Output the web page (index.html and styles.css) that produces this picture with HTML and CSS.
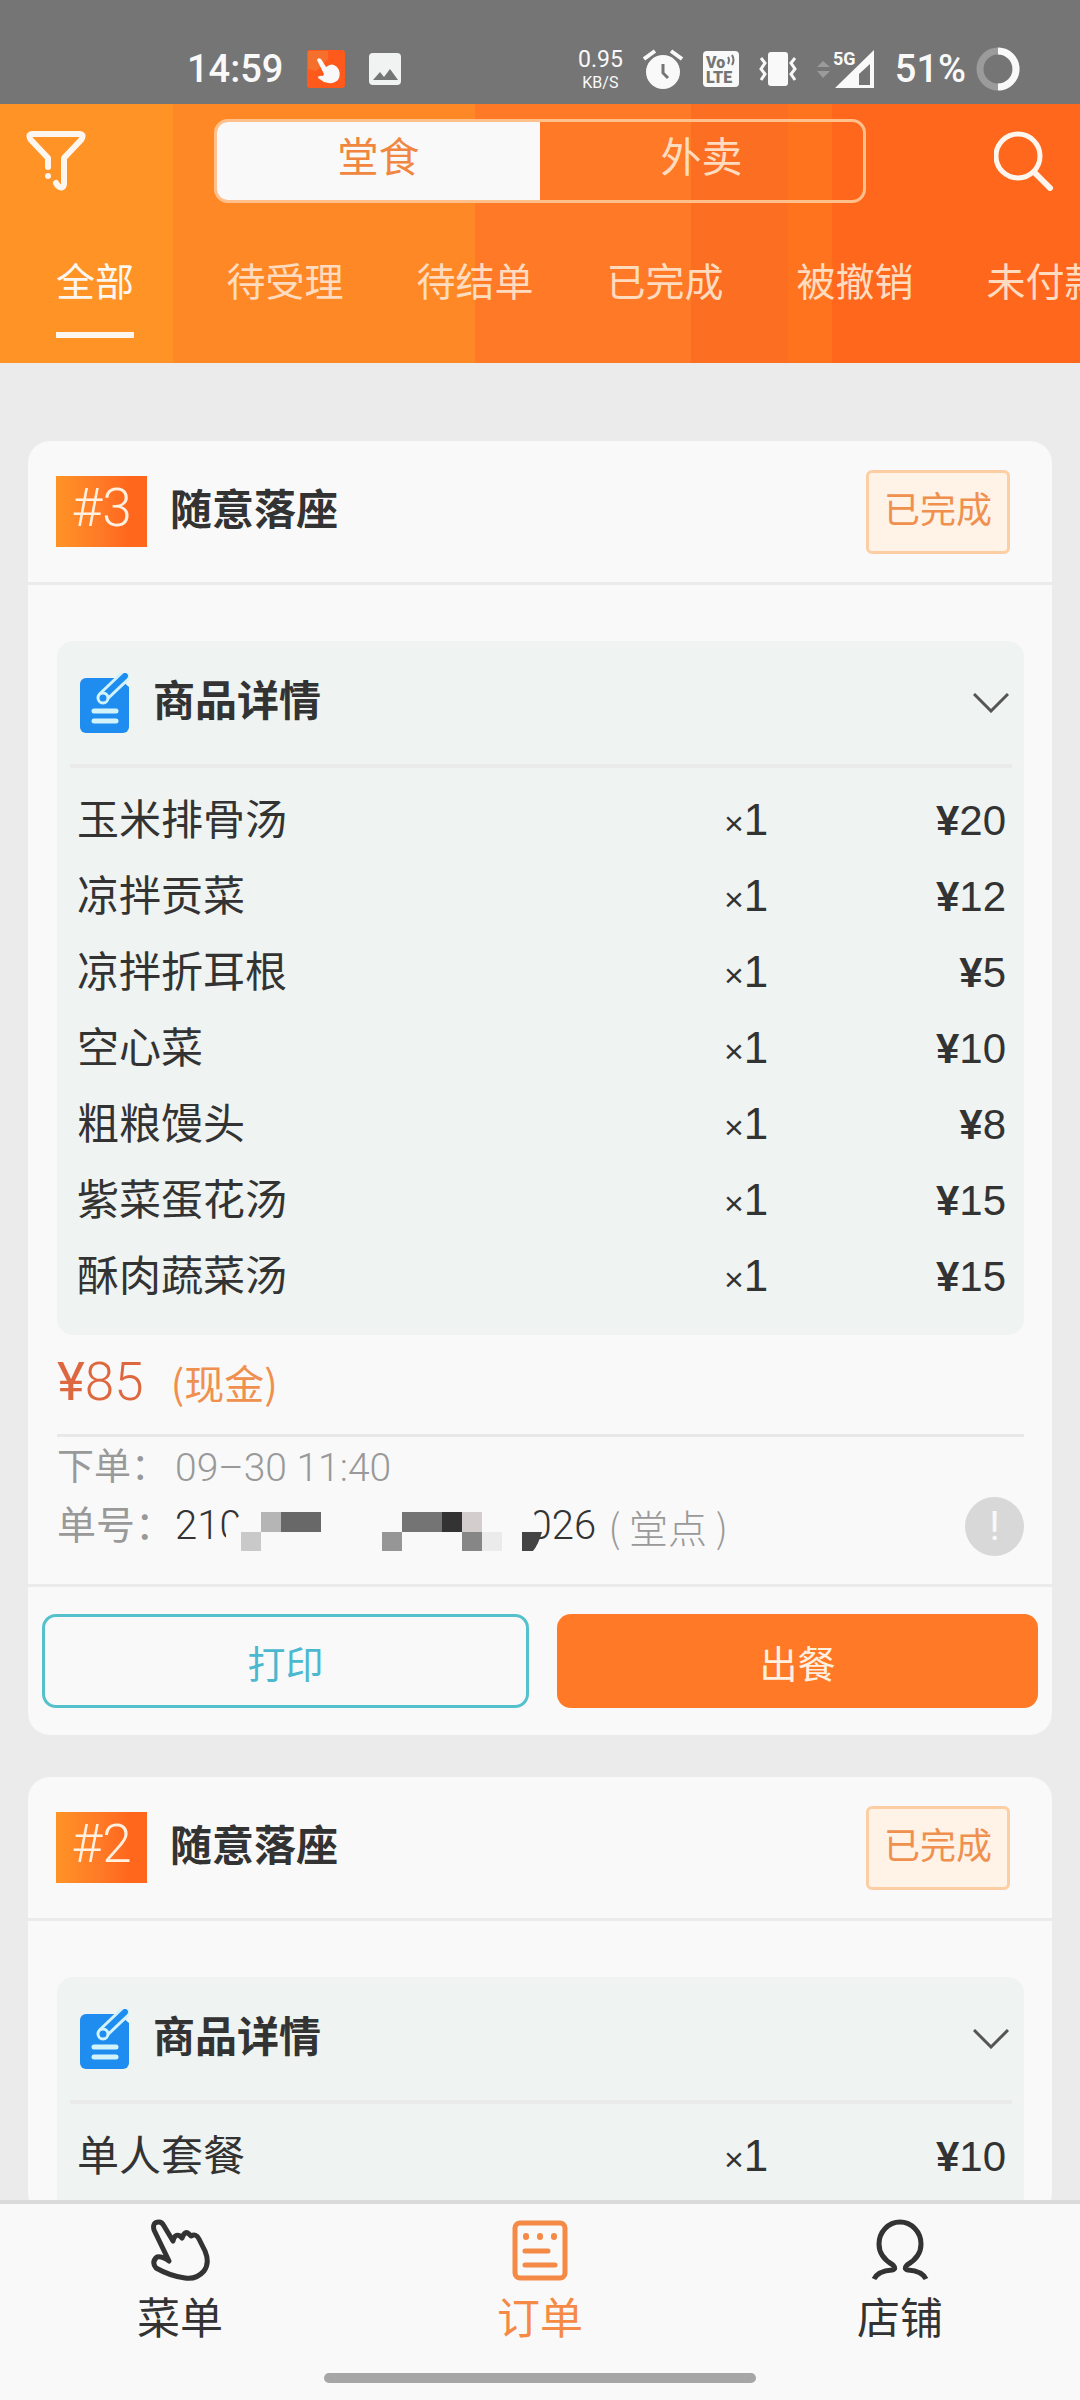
FILE: index.html
```html
<!DOCTYPE html>
<html lang="zh-CN">
<head>
<meta charset="utf-8">
<meta name="viewport" content="width=device-width, initial-scale=1">
<title>订单</title>
<link rel="stylesheet" href="styles.css">
</head>
<body>
<div class="app">
  <div class="status">
    <div class="status-left">
      <span class="clock">14:59</span>
      <svg class="app-badge" width="40" height="40" viewBox="0 0 40 40">
        <rect x="1" y="1" width="38" height="38" rx="3" fill="#ff5a1c"/>
        <path d="M2 2h20v8L10 22 2 20z" fill="#f5702c"/>
        <path d="M11 11q1-3 4-1l5 8q6-5 11 0 5 6 1 13-5 5-14 2l-6-4q0-3 5-2l1-2z" fill="#f9f9f9"/>
      </svg>
      <svg width="32" height="32" viewBox="0 0 32 32">
        <rect width="32" height="32" rx="4" fill="#f0f3f2"/>
        <path d="M4 27l7-8 4 5 6-8 8 11z" fill="#757575"/>
      </svg>
    </div>
    <div class="status-right">
      <span class="speed"><span class="speed-value">0.95</span><span class="speed-unit">KB/S</span></span>
      <svg width="40" height="42" viewBox="0 0 40 42">
        <circle cx="20" cy="24" r="17" fill="#f9f9f9"/>
        <path d="M1 11L12 3M39 11L28 3" stroke="#f9f9f9" stroke-width="4"/>
        <path d="M20 16v9l5 5" fill="none" stroke="#757575" stroke-width="3"/>
      </svg>
      <svg width="36" height="36" viewBox="0 0 36 36">
        <rect width="36" height="36" rx="4" fill="#f9f9f9"/>
        <text class="volte" x="3" y="17">Vo</text>
        <text class="volte" x="3" y="32">LTE</text>
        <path d="M25 6q2 3 0 7M29 4q3 5 0 10" fill="none" stroke="#757575" stroke-width="2"/>
      </svg>
      <svg width="38" height="34" viewBox="0 0 38 34">
        <rect x="9" y="0" width="20" height="34" rx="3" fill="#f9f9f9"/>
        <path d="M2 6l4 5-4 6 4 5-4 6M36 6l-4 5 4 6-4 5 4 6" fill="none" stroke="#f9f9f9" stroke-width="3"/>
      </svg>
      <svg width="58" height="46" viewBox="0 -4 58 46">
        <path d="M0 17l6-6 7 6zM0 21l6 7 7-7z" fill="#9b9b9b"/>
        <path fill-rule="evenodd" d="M57 0v38H18zM53 14L42 24v11h11z" fill="#f9f9f9"/>
        <text class="net" x="16" y="15">5G</text>
      </svg>
      <span class="clock">51%</span>
      <svg class="ring" width="44" height="44" viewBox="0 0 44 44">
        <circle cx="22" cy="22" r="18" fill="none" stroke="#9b9b9b" stroke-width="7"/>
        <path d="M22 4a18 18 0 0 1 0 36" fill="none" stroke="#f9f9f9" stroke-width="7"/>
      </svg>
    </div>
  </div>

  <header class="header">
    <div class="toolbar">
      <button class="icon-btn" aria-label="筛选">
        <svg width="60" height="60" viewBox="0 0 60 60" fill="none" stroke="#fdf6ee" stroke-width="6" stroke-linecap="round" stroke-linejoin="round">
          <path d="M22 36V27L5 9Q1 3 7 3H53Q59 3 55 9L38 27V53Q37 59 32 55L30 52"/>
          <path d="M22 45v0"/>
        </svg>
      </button>
      <div class="segment">
        <button class="seg-btn seg-active">堂食</button>
        <button class="seg-btn">外卖</button>
      </div>
      <button class="icon-btn" aria-label="搜索">
        <svg width="60" height="60" viewBox="0 0 60 60" fill="none" stroke="#fdf6ee" stroke-width="5" stroke-linecap="round">
          <circle cx="24" cy="25" r="22"/>
          <path d="M40 41L56 57" stroke-width="6"/>
        </svg>
      </button>
    </div>
    <nav class="tabs">
      <button class="tab tab-active">全部</button>
      <button class="tab">待受理</button>
      <button class="tab">待结单</button>
      <button class="tab">已完成</button>
      <button class="tab">被撤销</button>
      <button class="tab">未付款</button>
    </nav>
  </header>

  <main class="orders">
    <article class="card">
      <div class="card-head">
        <span class="number">#3</span>
        <h2 class="seat">随意落座</h2>
        <span class="state">已完成</span>
      </div>
      <div class="card-body">
        <section class="goods">
          <div class="goods-head">
            <svg width="49" height="60" viewBox="0 0 49 60">
              <rect x="0" y="5" width="49" height="55" rx="6" fill="#1f8df0"/>
              <path d="M35 2L49 0V14z" fill="#eff3f2"/>
              <path d="M23 24L44 4" stroke="#d3f3fa" stroke-width="12" stroke-linecap="round"/>
              <path d="M25 22L45 3" stroke="#1f8df0" stroke-width="6" stroke-linecap="round"/>
              <circle cx="23" cy="25" r="5" fill="#1f8df0" stroke="#d3f3fa" stroke-width="3"/>
              <path d="M14 38H36M14 48H36" stroke="#d3f3fa" stroke-width="5" stroke-linecap="round"/>
            </svg>
            <h3 class="goods-title">商品详情</h3>
            <button class="toggle" aria-label="展开">
              <svg width="36" height="20" viewBox="0 0 36 20"><path d="M1 1L18 18 35 1" fill="none" stroke="#555" stroke-width="3"/></svg>
            </button>
          </div>
          <table class="items">
            <tr><td>玉米排骨汤</td><td class="qty"><span class="times">×</span>1</td><td class="price"><b>¥</b>20</td></tr>
            <tr><td>凉拌贡菜</td><td class="qty"><span class="times">×</span>1</td><td class="price"><b>¥</b>12</td></tr>
            <tr><td>凉拌折耳根</td><td class="qty"><span class="times">×</span>1</td><td class="price"><b>¥</b>5</td></tr>
            <tr><td>空心菜</td><td class="qty"><span class="times">×</span>1</td><td class="price"><b>¥</b>10</td></tr>
            <tr><td>粗粮馒头</td><td class="qty"><span class="times">×</span>1</td><td class="price"><b>¥</b>8</td></tr>
            <tr><td>紫菜蛋花汤</td><td class="qty"><span class="times">×</span>1</td><td class="price"><b>¥</b>15</td></tr>
            <tr><td>酥肉蔬菜汤</td><td class="qty"><span class="times">×</span>1</td><td class="price"><b>¥</b>15</td></tr>
          </table>
        </section>
        <div class="total"><span class="amount"><span class="yen">¥</span>85</span><span class="pay">(现金)</span></div>
        <div class="meta">
          <div class="meta-row"><span class="meta-label small">下单：</span><span class="date">09–30 11:40</span></div>
          <div class="meta-row">
            <span class="meta-label">单号：</span><span class="serial">210</span>
            <svg class="mask" width="320" height="50" viewBox="0 0 320 50">
              <path d="M4 28Q12 18 24 10V50H4zM22 7H309Q319 20 312 40L300 50H22z" fill="#f9f9f9"/>
              <path d="M39 11h20v20h-20z" fill="#b5b5b5"/>
              <path d="M59 11h40v20h-40z" fill="#686868"/>
              <path d="M19 31h20v20h-20z" fill="#c9c9c9"/>
              <path d="M160 31h20v20h-20z" fill="#969696"/>
              <path d="M180 11h40v20h-40z" fill="#747474"/>
              <path d="M220 11h20v20h-20z" fill="#333"/>
              <path d="M240 11h20v20h-20z" fill="#d4cdcd"/>
              <path d="M240 31h20v20h-20z" fill="#868686"/>
              <path d="M260 31h20v20h-20z" fill="#ebebeb"/>
              <path d="M300 31h20q-4 14-10 20h-10z" fill="#444"/>
            </svg>
            <span class="serial">026</span><span class="kind">( 堂点 )</span>
            <button class="info" aria-label="订单说明">!</button>
          </div>
        </div>
      </div>
      <div class="actions">
        <button class="btn btn-line">打印</button>
        <button class="btn btn-fill">出餐</button>
      </div>
    </article>

    <article class="card">
      <div class="card-head">
        <span class="number">#2</span>
        <h2 class="seat">随意落座</h2>
        <span class="state">已完成</span>
      </div>
      <div class="card-body">
        <section class="goods">
          <div class="goods-head">
            <svg width="49" height="60" viewBox="0 0 49 60">
              <rect x="0" y="5" width="49" height="55" rx="6" fill="#1f8df0"/>
              <path d="M35 2L49 0V14z" fill="#eff3f2"/>
              <path d="M23 24L44 4" stroke="#d3f3fa" stroke-width="12" stroke-linecap="round"/>
              <path d="M25 22L45 3" stroke="#1f8df0" stroke-width="6" stroke-linecap="round"/>
              <circle cx="23" cy="25" r="5" fill="#1f8df0" stroke="#d3f3fa" stroke-width="3"/>
              <path d="M14 38H36M14 48H36" stroke="#d3f3fa" stroke-width="5" stroke-linecap="round"/>
            </svg>
            <h3 class="goods-title">商品详情</h3>
            <button class="toggle" aria-label="展开">
              <svg width="36" height="20" viewBox="0 0 36 20"><path d="M1 1L18 18 35 1" fill="none" stroke="#555" stroke-width="3"/></svg>
            </button>
          </div>
          <table class="items">
            <tr><td>单人套餐</td><td class="qty"><span class="times">×</span>1</td><td class="price"><b>¥</b>10</td></tr>
          </table>
        </section>
      </div>
    </article>
  </main>

  <nav class="tabbar">
    <div class="tabbar-items">
      <a class="nav-item" href="#menu">
        <svg width="60" height="62" viewBox="0 0 60 62" fill="none" stroke="#333" stroke-width="5" stroke-linejoin="round">
          <path d="M19 42L4 11Q2 3 9 3Q12 3 14 7L23 22Q25 14 30 17L32 19Q35 11 39 15L41 17Q46 14 49 20L55 32Q60 44 54 52Q46 61 35 59Q20 57 6 49Q1 43 7 38Q12 37 19 42z"/>
        </svg>
        <span>菜单</span>
      </a>
      <a class="nav-item nav-active" href="#orders">
        <svg width="60" height="62" viewBox="0 0 60 62" fill="none" stroke="#f48a45" stroke-width="5" stroke-linecap="round">
          <rect x="5" y="4" width="50" height="55" rx="5"/>
          <path d="M16 17v1M30 17v1M44 17v1" stroke-width="6"/>
          <path d="M15 32H38M15 46H45"/>
        </svg>
        <span>订单</span>
      </a>
      <a class="nav-item" href="#shop">
        <svg width="60" height="62" viewBox="0 0 60 62" fill="none" stroke="#333" stroke-width="5">
          <path d="M4 60Q8 52 22 51Q27 50 23 46Q9 38 9 25A21 22 0 0 1 51 25Q51 38 37 46Q33 50 38 51Q52 52 56 60"/>
        </svg>
        <span>店铺</span>
      </a>
    </div>
    <div class="home-bar"></div>
  </nav>
</div>
</body>
</html>
```

FILE: styles.css
```css
* { box-sizing: border-box; }

body {
  margin: 0;
  background: #ebebeb;
  color: #333;
  font-family: Roboto, "Noto Sans CJK SC", sans-serif;
}

h2, h3 { margin: 0; }

button {
  margin: 0;
  padding: 0;
  border: 0;
  background: none;
  color: inherit;
  font: inherit;
}

svg { display: block; flex: none; }

.app {
  display: flex;
  flex-direction: column;
  height: 100vh;
}

/* status bar */
.status {
  display: flex;
  flex: none;
  justify-content: space-between;
  align-items: center;
  height: 104px;
  padding: 34px 60px 0 187px;
  background: #757575;
  color: #f9f9f9;
}

.status-left { display: flex; align-items: center; gap: 23px; }
.status-right { display: flex; align-items: center; gap: 20px; }
.clock { font-size: 38px; line-height: 44px; font-weight: 500; }
.speed { display: flex; flex-direction: column; align-items: center; }
.speed-value { font-size: 23px; line-height: 27px; }
.speed-unit { font-size: 16px; line-height: 19px; }
.volte { font: 900 16px Roboto, sans-serif; fill: #757575; }
.net { font: 700 18px Roboto, sans-serif; fill: #f9f9f9; }
.ring { margin-left: -10px; }

/* header */
.header {
  flex: none;
  padding-top: 14px;
  background: linear-gradient(90deg, #ff9326 16%, #ff8826 16% 44%, #ff7926 44% 64%, #fc6f22 64% 73%, #ff731f 73% 77%, #ff671d 77%);
}

.toolbar {
  display: flex;
  justify-content: space-between;
  align-items: center;
  height: 85px;
  padding: 0 26px;
}

.segment {
  display: flex;
  width: 652px;
  height: 84px;
  border: 3px solid #ffc08c;
  border-radius: 14px;
  overflow: hidden;
}

.seg-btn {
  flex: 1;
  padding-bottom: 13px;
  color: #ffdcc0;
  font-size: 41px;
}

.seg-active { background: #f9f9f9; color: #f0863f; }

.tabs {
  display: flex;
  height: 160px;
  overflow: hidden;
}

.tab {
  display: flex;
  flex: none;
  flex-direction: column;
  align-items: center;
  gap: 19px;
  width: 190px;
  padding-top: 50px;
  color: #ffdcc0;
  font-size: 39px;
  line-height: 60px;
}

.tab-active { color: #fdf6ee; }

.tab-active::after {
  content: "";
  width: 78px;
  height: 6px;
  background: #fdf6ee;
}

/* order list */
.orders {
  display: flex;
  flex: 1;
  flex-direction: column;
  gap: 42px;
  min-height: 0;
  padding: 78px 28px 42px;
  overflow-y: auto;
  scrollbar-width: none;
}

.card {
  flex: none;
  border-radius: 22px;
  background: #f9f9f9;
}

.card-head {
  display: flex;
  align-items: center;
  height: 144px;
  padding: 0 42px 0 28px;
  border-bottom: 3px solid #ebebeb;
}

.number {
  width: 91px;
  height: 71px;
  background: linear-gradient(90deg, #ff9326, #ff7926 50%, #ff671d 80%);
  color: #fff0e0;
  font-size: 53px;
  line-height: 64px;
  font-weight: 300;
  text-align: center;
}

.seat {
  flex: 1;
  padding: 0 0 2px 23px;
  font-size: 42px;
  line-height: 60px;
}

.state {
  width: 144px;
  height: 84px;
  border: 3px solid #fdcda4;
  border-radius: 6px;
  background: #fff2e6;
  color: #f0904f;
  font-size: 36px;
  line-height: 76px;
  text-align: center;
}

.card-body { padding: 56px 28px 0 29px; }

.goods {
  padding: 0 12px 20px 13px;
  border-radius: 16px;
  background: #eff3f2;
}

.goods-head {
  display: flex;
  align-items: center;
  height: 127px;
  padding: 0 3px 0 10px;
  border-bottom: 4px solid #eaeaea;
}

.goods-title {
  flex: 1;
  padding: 0 0 2px 24px;
  font-size: 42px;
  line-height: 60px;
}

.items {
  width: 100%;
  margin-top: 15px;
  border-collapse: collapse;
  font-size: 42px;
  line-height: 60px;
}

.items td { height: 76px; padding: 0 0 0 7px; }
.items .qty { width: 70px; padding: 0; font-family: "Liberation Sans", sans-serif; font-size: 44px; }
.times { font-size: 34px; }
.items .price { width: 218px; padding: 0 6px 0 0; text-align: right; font-family: "Liberation Sans", sans-serif; }
.price b { font-size: 42px; }

.total {
  display: flex;
  align-items: center;
  gap: 27px;
  height: 102px;
  padding-bottom: 6px;
  border-bottom: 3px solid #e8e8e8;
}

.amount { color: #dd6840; font-size: 53px; line-height: 60px; font-weight: 300; }
.yen { font-weight: 400; }
.pay { color: #f0904f; font-family: "Noto Sans CJK SC", sans-serif; font-size: 40px; line-height: 60px; }

.meta { padding: 2px 0 29px; color: #999; font-size: 39px; line-height: 58px; }
.meta-row { display: flex; align-items: center; height: 58px; }
.meta-label { flex: none; width: 118px; }
.small { font-size: 37px; }
.date, .serial { font-weight: 300; }
.serial { color: #333; font-size: 40px; }
.mask { position: relative; margin: 0 -12px 0 -20px; }
.kind { flex: 1; padding-left: 12px; font-family: "Noto Sans CJK SC", sans-serif; font-weight: 300; }

.info {
  width: 59px;
  height: 59px;
  border-radius: 50%;
  background: #d8d8d8;
  color: #f9f9f9;
  font-size: 41px;
  line-height: 58px;
}

.actions {
  display: flex;
  gap: 28px;
  padding: 27px 14px;
  border-top: 3px solid #ebebeb;
}

.btn {
  flex: 1;
  height: 94px;
  border-radius: 14px;
  font-size: 38px;
}

.btn-line { border: 3px solid #55c1cc; color: #4bb8cf; }
.btn-fill { background: #ff7926; color: #fff0e0; }

/* bottom navigation */
.tabbar {
  flex: none;
  padding: 15px 0 17px;
  border-top: 4px solid #dadada;
  background: #f9f9f9;
}

.tabbar-items { display: flex; height: 154px; }

.nav-item {
  display: flex;
  flex: 1;
  flex-direction: column;
  align-items: center;
  gap: 6px;
  color: #333;
  font-size: 43px;
  line-height: 64px;
  text-decoration: none;
}

.nav-active { color: #f48a45; }

.home-bar {
  width: 40%;
  height: 10px;
  margin: 0 auto;
  border-radius: 5px;
  background: #a6a6a6;
}
```
